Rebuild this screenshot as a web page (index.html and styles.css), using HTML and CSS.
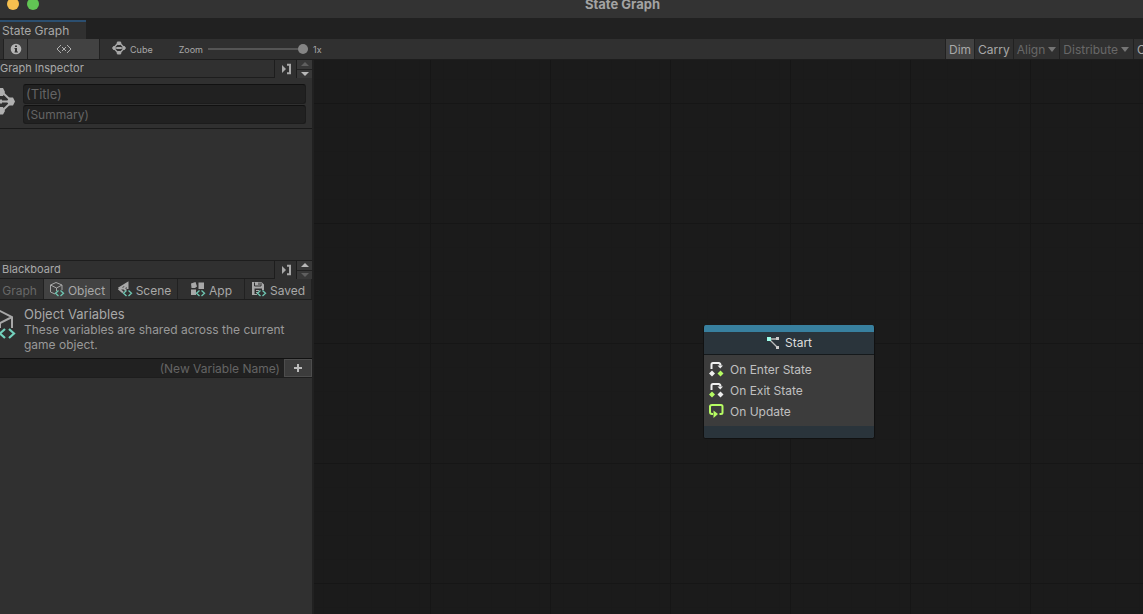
FILE: index.html
```html
<!DOCTYPE html>
<html lang="en">
<head>
<meta charset="utf-8">
<title>State Graph</title>
<link rel="stylesheet" href="styles.css">
</head>
<body>
<svg class="defs" aria-hidden="true">
  <symbol id="machine" viewBox="0 0 14 14">
    <path d="M1.500 7 6 2.200h2L12.500 7 8 11.800H6zM4 7h6" fill="none" stroke="currentColor" stroke-width="1.300"/>
    <path d="M4.500 2l1-1.500h3l1 1.500-1 2h-3zM4.500 12l1-2h3l1 2-1 1.500h-3zM0 7l1.500-2h1.500l1 2-1 2H1.500zM14 7l-1.500-2H11l-1 2 1 2h1.500zM5 6h4v2H5z" fill="currentColor"/>
  </symbol>
  <symbol id="code" viewBox="0 0 16 16">
    <path d="M9.500 9.500l-3 2.700 3 2.700M11.500 9.500l3 2.700-3 2.700" fill="none" stroke="#6fc7b3" stroke-width="1.300"/>
  </symbol>
  <symbol id="dock" viewBox="0 0 12 12">
    <path d="M2 2v8l4-4z" fill="currentColor"/>
    <path d="M7 1.800h3v8.400H7" fill="none" stroke="currentColor" stroke-width="2"/>
  </symbol>
  <symbol id="flow" viewBox="0 0 16 16">
    <path d="M2.500 8V3.500Q2.500 2 4 2H9.500Q11.500 2 11.500 4.500" fill="none" stroke="#eee" stroke-width="2"/>
    <path d="M8.500 4.500h5.500l-2.750 3z" fill="#eee"/>
  </symbol>
</svg>

<header class="titlebar">
  <div class="lights"><span class="light amber"></span><span class="light green"></span></div>
  <h1>State Graph</h1>
</header>
<nav class="tabstrip"><button class="doc-tab">State Graph</button></nav>

<div class="toolbar">
  <button class="tool info on" aria-label="Inspector">
    <svg width="12" height="12" viewBox="0 0 12 12"><circle cx="6" cy="6" r="5.300" fill="#b4b4b4"/><path d="M5 2.500h2v1.500H5zM4.500 5H7v3.500h1v1H4.500v-1H5V6h-.5z" fill="#333"/></svg>
  </button>
  <button class="tool vars on" aria-label="Blackboard">
    <svg width="16" height="10" viewBox="0 0 16 10"><path d="M5 1 1 5l4 4M11 1l4 4-4 4M6 3l4 4M10 3l-4 4" fill="none" stroke="#b0b0b0"/></svg>
  </button>
  <button class="crumb"><svg width="14" height="14"><use href="#machine"/></svg>Cube</button>
  <label class="zoom">Zoom <input type="range" min="0" max="100" value="100"> 1x</label>
  <div class="tools-right">
    <button class="tool on">Dim</button>
    <button class="tool">Carry</button>
    <button class="tool off">Align<span class="caret"></span></button>
    <button class="tool off distribute">Distribute<span class="caret"></span></button>
    <button class="tool cut">Overview</button>
  </div>
</div>

<main class="work">
  <aside class="side">
    <section class="inspector">
      <div class="head">
        <h2>Graph Inspector</h2>
        <button class="dock" aria-label="Dock inspector"><svg width="12" height="12"><use href="#dock"/></svg></button>
        <div class="move"><button class="up" disabled aria-label="Move up"></button><button class="down" aria-label="Move down"></button></div>
      </div>
      <div class="fields">
        <svg class="edge-icon" width="32" height="32" viewBox="0 0 32 32"><path d="M3 17.500h25M18 8l10 9.500L18 27" fill="none" stroke="#b0b0b0" stroke-width="2"/><path d="M11 8l3-4h5l2 4-2 4h-5zM11 27l3-4h5l2 4-2 3.500h-5zM23 17.500l2-4h4l2 4-2 4h-4zM11 15.500h7v4h-7z" fill="#b0b0b0"/></svg>
        <div class="inputs">
          <input class="big" type="text" placeholder="(Title)" aria-label="Title">
          <input type="text" placeholder="(Summary)" aria-label="Summary">
        </div>
      </div>
    </section>

    <section class="board">
      <div class="head board-head">
        <h2>Blackboard</h2>
        <button class="dock" aria-label="Dock blackboard"><svg width="12" height="12"><use href="#dock"/></svg></button>
        <div class="move"><button class="up" aria-label="Move up"></button><button class="down" disabled aria-label="Move down"></button></div>
      </div>
      <div class="scopes">
        <button class="scope off">Graph</button>
        <button class="scope on"><svg width="16" height="16" viewBox="0 0 16 16"><path d="M6 13 1.500 11V4l5.500-2.500L13 4v5M1.500 4l6 3L13 4M7.500 7v3" fill="none" stroke="#a8a8a8"/><use href="#code"/></svg>Object</button>
        <button class="scope"><svg width="16" height="16" viewBox="0 0 16 16"><path d="M1.500 7.500 10.500 2v6M1.500 7.500l4.500 4M2 7.500h5l3.500-5M7 7.500l2 2" fill="none" stroke="#a8a8a8" stroke-width="2"/><use href="#code"/></svg>Scene</button>
        <button class="scope"><svg width="16" height="16" viewBox="0 0 16 16"><path d="M1 2.500l4.500-1.500L7 5.500 5 7H1.500zM8.500 1.500H14V8H8.500zM1 8.500h5V14H1z" fill="#a8a8a8"/><use href="#code"/></svg>App</button>
        <button class="scope"><svg width="16" height="16" viewBox="0 0 16 16"><path d="M1 1h9.500L13 3.500V9h-2V7.500H3.500V13H6v1H1z" fill="#a8a8a8"/><path d="M3.500 1.500V5H10V1.500M8 1.500V4" fill="none" stroke="#303030"/><path d="M5 9.500h3M5 11.500h2" stroke="#a8a8a8"/><use href="#code"/></svg>Saved</button>
      </div>
      <div class="about">
        <svg class="edge-icon" width="32" height="32" viewBox="0 0 32 32"><path d="M3 7 16 2l12 6v11M16 14l12-6M16 14v5" fill="none" stroke="#a8a8a8" stroke-width="2"/><path d="M21 20l-5 4.500 5 4.500M25 20l5 4.500-5 4.500" fill="none" stroke="#73d0bc" stroke-width="2.200"/></svg>
        <div><h3>Object Variables</h3><p>These variables are shared across the current game object.</p></div>
      </div>
      <div class="new-var">
        <input type="text" placeholder="(New Variable Name)" aria-label="New variable name">
        <button aria-label="Add variable"><svg width="10" height="10" viewBox="0 0 10 10"><path d="M5 1v8M1 5h8" stroke="#bbb" stroke-width="2"/></svg></button>
      </div>
    </section>
  </aside>

  <section class="canvas" aria-label="Graph canvas">
    <article class="node">
      <h2><svg width="14" height="14" viewBox="0 0 14 14"><path d="M3 3h8M3 3l8 8" stroke="#bbb" stroke-width="1.300"/><path d="M10 1h3v3h-3zM10 10h3v3h-3z" fill="#ccc"/><path d="M1 1h4v4H1z" fill="#9dffeb"/></svg>Start</h2>
      <ul>
        <li><svg width="16" height="16"><use href="#flow"/><path d="M0 12.500l3-3 3 3-3 3z" fill="#eee"/><path d="M8.500 12.500l3-3 3 3-3 3z" fill="#b6fb63"/></svg>On Enter State</li>
        <li><svg width="16" height="16"><use href="#flow"/><path d="M0 12.500l3-3 3 3-3 3z" fill="#b6fb63"/><path d="M8.500 12.500l3-3 3 3-3 3z" fill="#eee"/></svg>On Exit State</li>
        <li><svg width="16" height="16" viewBox="0 0 16 16"><path d="M4 11H3Q1 11 1 9V3.500Q1 2 3 2h9Q13.500 2 13.500 3.500v6Q13.500 11 12 11h-1.500" fill="none" stroke="#b6fb63" stroke-width="2"/><path d="M4.500 7.500 9 11l-4.500 4z" fill="#b6fb63"/></svg>On Update</li>
      </ul>
      <footer></footer>
    </article>
  </section>
</main>
</body>
</html>
```
FILE: styles.css
```css
* { box-sizing: border-box; }
body {
  margin: 0;
  height: 100vh;
  display: flex;
  flex-direction: column;
  overflow: hidden;
  background: #303030;
  color: #a8a8a8;
  font: 12px/15px Inter, sans-serif;
}
h1, h2, h3, p, ul { margin: 0; padding: 0; font: inherit; }
button, input { margin: 0; padding: 0; border: 0; border-radius: 0; background: none; color: inherit; font: inherit; }
svg { flex: none; }
.defs { position: absolute; width: 0; height: 0; }

.titlebar { flex: none; height: 18px; display: flex; background: #333; }
.lights { width: 102px; display: flex; gap: 8px; padding-left: 7px; }
.light { width: 12px; height: 12px; margin-top: -2px; border-radius: 50%; }
.amber { background: #f5bf4f; }
.green { background: #61c554; }
.titlebar h1 { flex: 1; text-align: center; font-size: 13px; line-height: 8px; font-weight: 700; color: #a3a3a3; }

.tabstrip { flex: none; height: 21px; padding-top: 2px; display: flex; background: #212121; }
.doc-tab { width: 86px; padding-left: 2px; text-align: left; border-top: 2px solid #2c4f70; background: #303030; }

.toolbar { flex: none; height: 21px; display: flex; padding-left: 3px; border-bottom: 1px solid #1d1d1d; background: #303030; white-space: nowrap; }
.tool { display: flex; align-items: center; justify-content: center; gap: 3px; padding: 1px 3px 0; border-left: 1px solid #212121; }
.on { background: #424242; }
.off { color: #686868; }
.info { width: 24px; padding-top: 0; }
.vars { width: 73px; border-right: 1px solid #212121; padding-top: 0; }
.crumb { display: flex; align-items: center; gap: 4px; margin-left: 12px; font-size: 9px; }
.crumb svg { margin-bottom: 2px; }
.zoom { display: flex; align-items: center; gap: 5px; margin-left: 26px; font-size: 9px; }
.zoom input { appearance: none; width: 100px; height: 10px; }
.zoom input::-webkit-slider-runnable-track { height: 2px; background: #555; }
.zoom input::-webkit-slider-thumb { appearance: none; width: 10px; height: 10px; margin-top: -4px; border-radius: 50%; background: #858585; }
.tools-right { display: flex; margin-left: auto; }
.distribute { padding-right: 4px; }
.cut { width: 10px; justify-content: flex-start; overflow: hidden; }
.caret { border: 4px solid transparent; border-top: 5px solid #757575; border-bottom: 0; }

.work { flex: 1; min-height: 0; display: flex; }
.side { flex: none; width: 314px; border-right: 2px solid #212121; background: #303030; }
.inspector { height: 200px; }
.head { display: flex; height: 18px; font-size: 11px; }
.head h2 { flex: 1; line-height: 17px; border-right: 1px solid #1d1d1d; border-bottom: 1px solid #1d1d1d; }
.board-head { height: 19px; border-top: 1px solid #1d1d1d; }
.board-head h2 { padding-left: 2px; }
.dock { width: 22px; display: grid; place-items: center; border-right: 1px solid #1d1d1d; color: #a8a8a8; }
.move { width: 15px; display: grid; grid-template-rows: 1fr 1fr; gap: 1px; background: #212121; }
.move button { display: grid; place-items: center; background: #383838; }
.move button::before { content: ""; border: 4px solid transparent; }
.move .up::before { border-bottom-color: #b8b8b8; border-top-width: 0; }
.move .down::before { border-top-color: #b8b8b8; border-bottom-width: 0; }
.move button:disabled::before { opacity: .3; }

.fields { display: flex; padding: 6px 6px 4px 0; border-bottom: 1px solid #191919; }
.edge-icon { margin-left: -16px; }
.inputs { flex: 1; display: grid; gap: 1px; margin-left: 7px; }
.inputs input { width: 100%; height: 19px; padding: 0 2px; border: 1px solid #1c1c1c; border-top-color: #111; border-radius: 3px; background: #212121; }
.inputs .big { height: 20px; font-size: 13px; }
input::placeholder { color: #646464; opacity: 1; }

.scopes { display: grid; grid-template-columns: 44px 67px 67px 67px 67px; height: 21px; border-bottom: 1px solid #1d1d1d; }
.scope { display: flex; align-items: center; justify-content: center; gap: 3px; padding-top: 2px; border-right: 1px solid #212121; }
.scope.off { padding-right: 4px; }
.scope svg { margin-bottom: 2px; }
.about { display: flex; gap: 8px; height: 58px; padding: 6px 6px 0 0; }
.about .edge-icon { margin-top: 3px; }
.about h3 { font-size: 13px; line-height: 16px; }
.about p { color: #999; }
.new-var { display: flex; height: 20px; border-top: 1px solid #111; border-bottom: 1px solid #1d1d1d; background: #212121; }
.new-var input { flex: 1; min-width: 0; padding-right: 4px; text-align: right; }
.new-var button { width: 28px; display: grid; place-items: center; border: 1px solid #4d4d4d; background: #3c3c3c; }

.canvas {
  position: relative;
  flex: 1;
  overflow: hidden;
  background-color: #1b1b1b;
  background-image:
    linear-gradient(90deg, #161616 1px, transparent 1px),
    linear-gradient(#161616 1px, transparent 1px),
    linear-gradient(90deg, #1a1a1a 1px, transparent 1px),
    linear-gradient(#1a1a1a 1px, transparent 1px);
  background-size: 120px 120px, 120px 120px, 24px 24px, 24px 24px;
  background-position: 116px 0, 0 43px, 9px 0, 0 19px;
}
.node { position: absolute; left: 389px; top: 265px; width: 172px; border: 1px solid #111; border-top: 0; border-radius: 3px; overflow: hidden; background: #3c3c3c; color: #c0c0c0; }
.node h2 { display: flex; align-items: center; justify-content: center; gap: 5px; height: 30px; padding-bottom: 1px; border-top: 7px solid #38809f; border-bottom: 1px solid #15191b; background: #2a343b; color: #ddd; }
.node ul { padding: 4px 5px; list-style: none; }
.node li { display: flex; align-items: center; gap: 5px; height: 21px; }
.node li svg { margin-bottom: 1px; }
.node footer { height: 12px; background: #2a343b; }
```
